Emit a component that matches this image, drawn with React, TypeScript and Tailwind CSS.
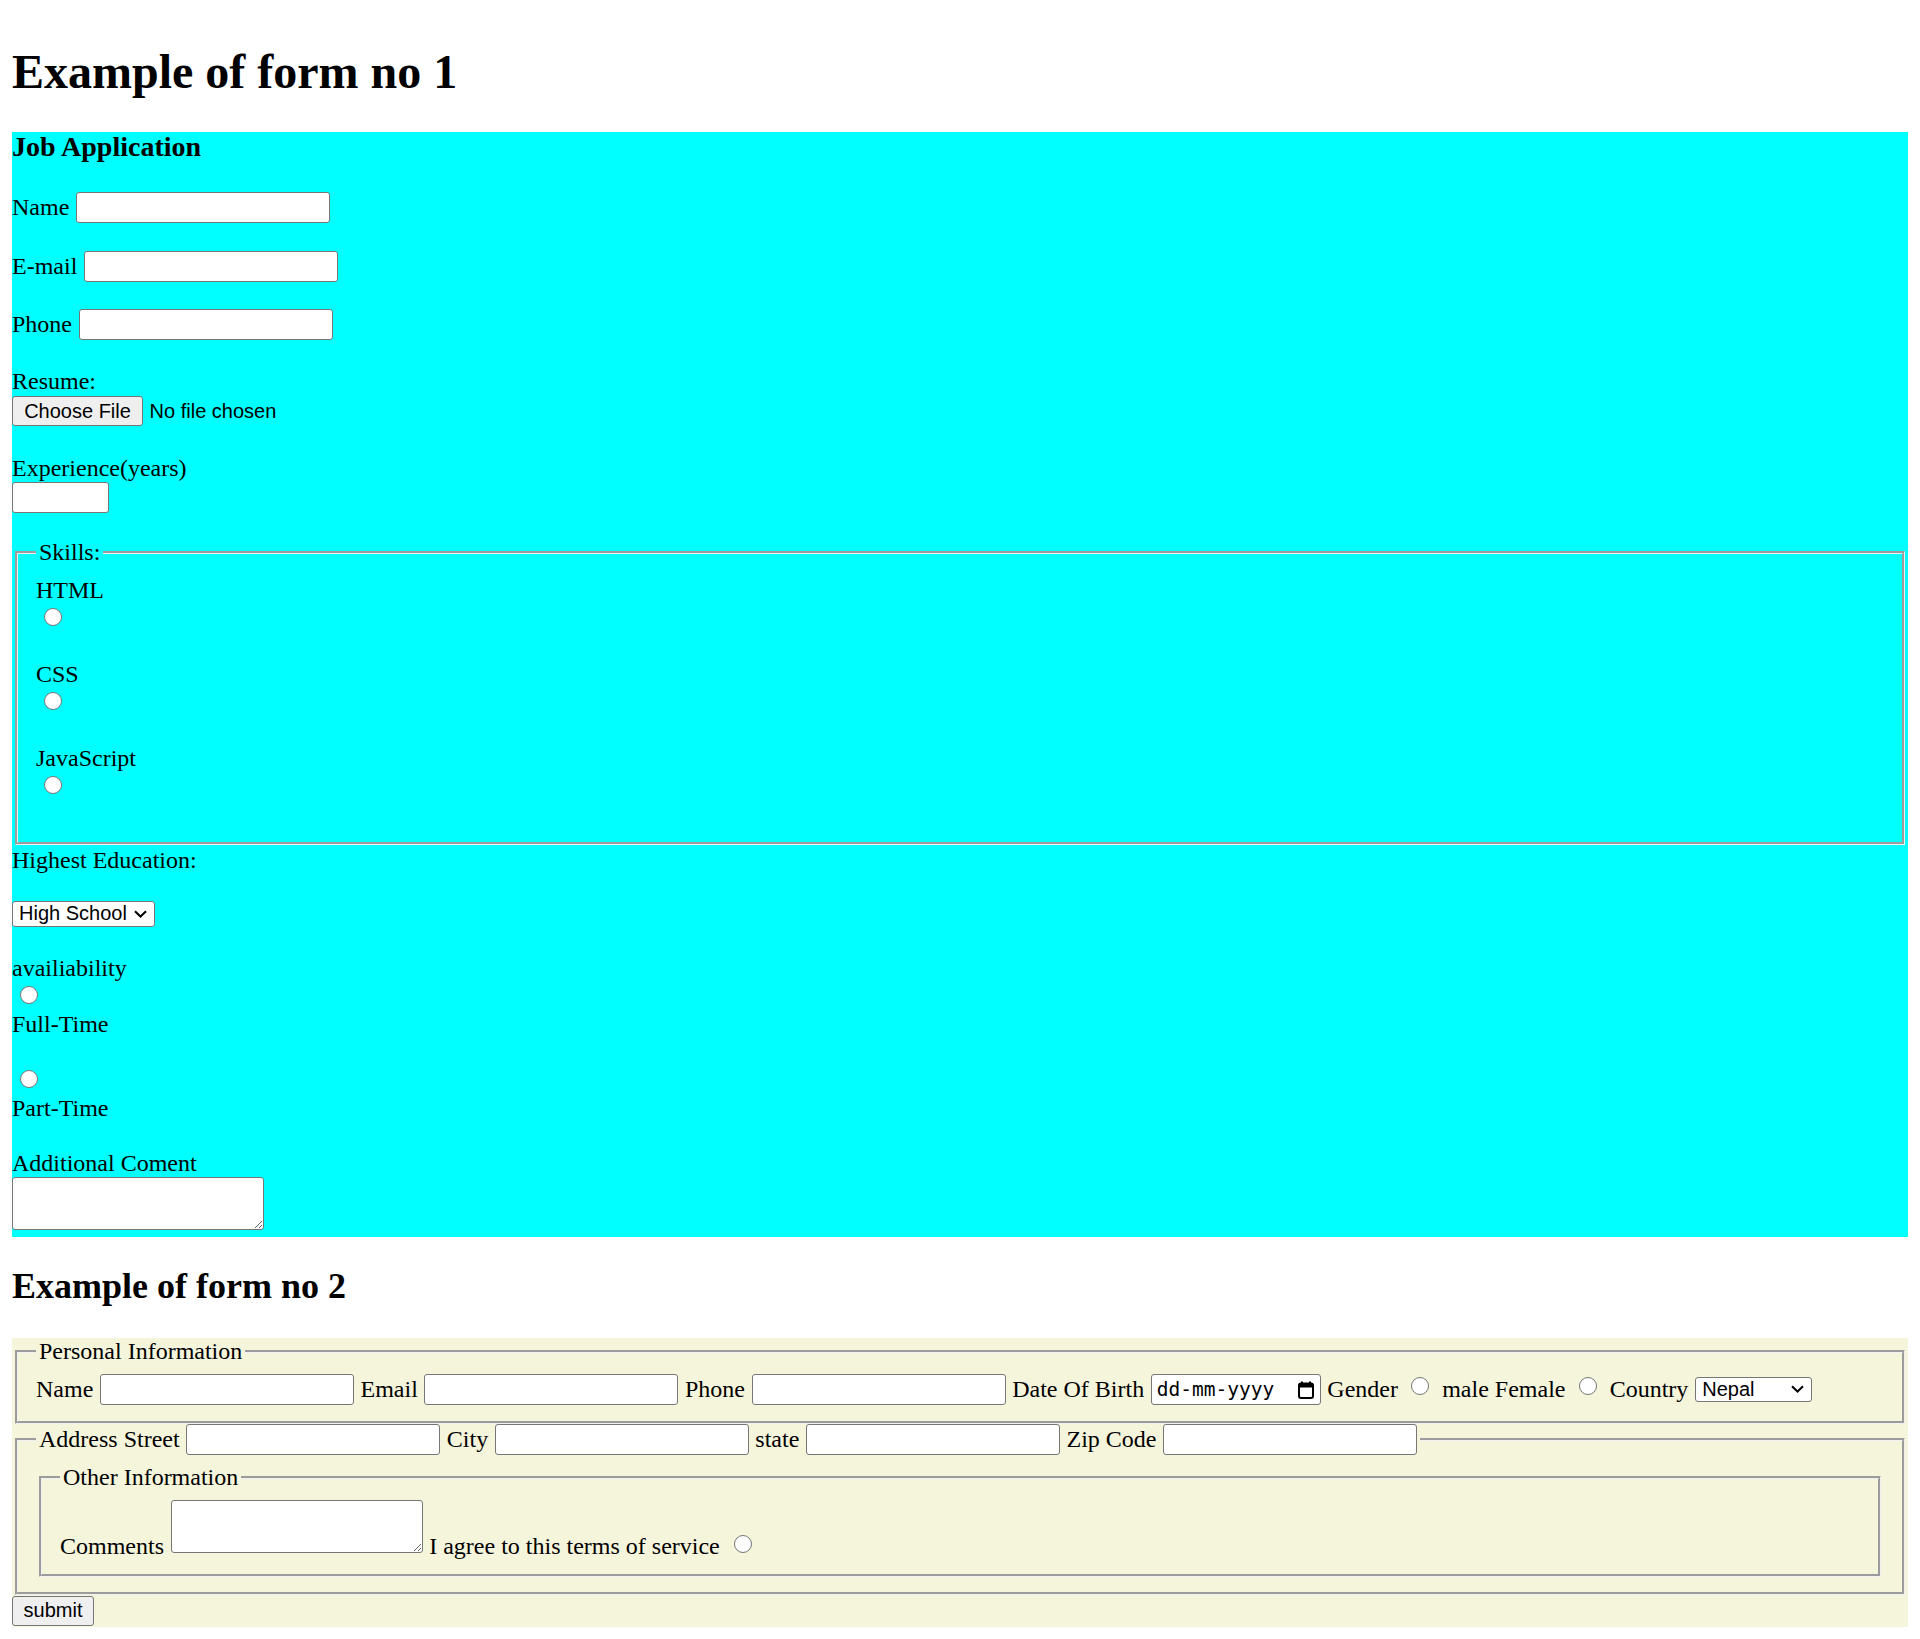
import React from "react";

const inputCls =
  "block h-[31px] w-[254px] shrink-0 rounded-[3px] border border-[#767676] bg-white outline-none";

function Radio({ className }: { className: string }) {
  return (
    <input
      type="radio"
      className={
        "block h-[18px] w-[18px] shrink-0 appearance-none rounded-full border border-[#767676] bg-white " +
        className
      }
    />
  );
}

function Chevron() {
  return (
    <svg width="13" height="8" viewBox="0 0 13 8" className="block shrink-0">
      <path d="M1 1.3L6.5 6.5L12 1.3" fill="none" stroke="#000" strokeWidth="2" />
    </svg>
  );
}

function Calendar() {
  return (
    <svg width="16" height="18" viewBox="0 0 16 18" className="block shrink-0">
      <rect x="3" y="0.5" width="2" height="3" fill="#000" />
      <rect x="11" y="0.5" width="2" height="3" fill="#000" />
      <rect x="1" y="2.5" width="14" height="14.5" rx="2" fill="none" stroke="#000" strokeWidth="2" />
      <rect x="1" y="2.5" width="14" height="4" fill="#000" />
    </svg>
  );
}

export default function App() {
  return (
    <div className="flex flex-col bg-white px-[12px] py-[12px] font-['Liberation_Serif',serif] text-[24px] leading-[30.4px] text-black">
      <h1 className="mt-[32.16px] mb-[32.16px] text-[48px] font-bold leading-[55.2px]">
        Example of form no 1
      </h1>

      <form className="flex flex-col bg-[#00ffff]">
        <h3 className="h-[32.3px] text-[28px] font-bold leading-[30.8px]">Job Application</h3>

        <div className="mt-[28px] flex h-[34.8px] items-start gap-[6.6px]">
          <label className="whitespace-nowrap">Name</label>
          <input type="text" className={inputCls} />
        </div>
        <div className="mt-[24px] flex h-[34.8px] items-start gap-[6.6px]">
          <label className="whitespace-nowrap">E-mail</label>
          <input type="email" className={inputCls} />
        </div>
        <div className="mt-[24px] flex h-[34.8px] items-start gap-[6.6px]">
          <label className="whitespace-nowrap">Phone</label>
          <input type="tel" className={inputCls} />
        </div>

        <div className="mt-[22.25px] flex flex-col">
          <label className="h-[27.6px]">Resume:</label>
          <div className="flex h-[35.4px] items-start gap-[6.6px] pt-[1.75px] font-['Liberation_Sans',sans-serif] text-[20px] leading-[23px]">
            <button
              type="button"
              className="flex h-[30.6px] w-[131px] items-center justify-center rounded-[3px] border border-[#767676] bg-[#efefef]"
            >
              Choose File
            </button>
            <span className="flex h-[30.6px] items-center">No file chosen</span>
          </div>
        </div>

        <div className="mt-[24px] flex flex-col">
          <label className="h-[27.6px]">Experience(years)</label>
          <div className="h-[34px] pt-[0.75px]">
            <input type="number" className="block h-[31px] w-[97px] rounded-[3px] border border-[#767676] bg-white outline-none" />
          </div>
        </div>

        <fieldset className="mx-[3px] mt-[24px] border-[3px] border-[#f0f0f0] px-[18px] pt-[8.4px] pb-[15px] [border-style:groove]">
          <legend className="px-[3px] leading-[27.6px]">Skills:</legend>
          <div className="flex flex-col">
            <label className="h-[27.6px]">HTML</label>
            <div className="h-[28.8px] pt-[5.7px] pl-[8px]">
              <Radio className="" />
            </div>
            <div className="h-[27.6px]" />
            <label className="h-[27.6px]">CSS</label>
            <div className="h-[28.8px] pt-[5.7px] pl-[8px]">
              <Radio className="" />
            </div>
            <div className="h-[27.6px]" />
            <label className="h-[27.6px]">JavaScript</label>
            <div className="h-[28.8px] pt-[5.7px] pl-[8px]">
              <Radio className="" />
            </div>
            <div className="h-[27.6px]" />
          </div>
        </fieldset>

        <label className="h-[27.6px]">Highest Education:</label>
        <div className="mt-[28.1px] flex">
          <div className="flex h-[26px] w-[143px] items-center justify-between rounded-[3px] border border-[#767676] bg-white pl-[6px] pr-[7.5px] font-['Liberation_Sans',sans-serif] text-[20px] leading-[23px]">
            <span>High School</span>
            <Chevron />
          </div>
        </div>

        <label className="mt-[26px] h-[27.6px]">availiability</label>
        <div className="h-[28.8px] pt-[5.7px] pl-[8px]">
          <Radio className="" />
        </div>
        <label className="h-[27.6px]">Full-Time</label>
        <div className="h-[27.6px]" />
        <div className="h-[28.8px] pt-[5.7px] pl-[8px]">
          <Radio className="" />
        </div>
        <label className="h-[27.6px]">Part-Time</label>

        <label className="mt-[27px] h-[27.6px]">Additional Coment</label>
        <div className="h-[61.35px] pt-[1.45px]">
          <textarea className="block h-[53px] w-[252px] resize rounded-[3px] border border-[#767676] bg-white outline-none" />
        </div>
      </form>

      <h2 className="mt-[29.9px] mb-[29.9px] text-[36px] font-bold leading-[41.4px]">
        Example of form no 2
      </h2>

      <form className="flex flex-col bg-[#f5f5dc]">
        <fieldset className="mx-[3px] border-[3px] border-[#f0f0f0] px-[18px] pt-[8.4px] pb-[15px] [border-style:groove]">
          <legend className="px-[3px] leading-[27.6px]">Personal Information</legend>
          <div className="flex h-[32px] items-start gap-[6.6px] whitespace-nowrap">
            <label>Name</label>
            <input type="text" className={inputCls + " mt-[0.5px]"} />
            <label>Email</label>
            <input type="email" className={inputCls + " mt-[0.5px]"} />
            <label>Phone</label>
            <input type="tel" className={inputCls + " mt-[0.5px]"} />
            <label>Date Of Birth</label>
            <div className="mt-[0.5px] flex h-[31px] w-[170px] shrink-0 items-center justify-between rounded-[3px] border border-[#767676] bg-white pl-[5px] pr-[6px]">
              <span className="font-['DejaVu_Sans_Mono',monospace] text-[19.5px] leading-[22px]">dd-mm-yyyy</span>
              <Calendar />
            </div>
            <label>Gender</label>
            <Radio className="mt-[3.4px] ml-[6.5px] mr-[6.5px]" />
            <label>male Female</label>
            <Radio className="mt-[3.4px] ml-[6.5px] mr-[6.5px]" />
            <label>Country</label>
            <div className="mt-[3px] flex h-[25px] w-[117px] shrink-0 items-center justify-between rounded-[3px] border border-[#767676] bg-white pl-[6.3px] pr-[7px] font-['Liberation_Sans',sans-serif] text-[20px] leading-[23px]">
              <span>Nepal</span>
              <Chevron />
            </div>
          </div>
        </fieldset>

        <fieldset className="mx-[3px] border-[3px] border-[#f0f0f0] px-[18px] pt-[8.4px] pb-[15px] [border-style:groove]">
          <legend className="px-[3px]">
            <div className="flex h-[31.5px] items-start gap-[6.6px] whitespace-nowrap pt-[0.5px]">
              <label className="h-[27.6px]">Address Street</label>
              <input type="text" className={inputCls} />
              <label className="h-[27.6px]">City</label>
              <input type="text" className={inputCls} />
              <label className="h-[27.6px]">state</label>
              <input type="text" className={inputCls} />
              <label className="h-[27.6px]">Zip Code</label>
              <input type="text" className={inputCls} />
            </div>
          </legend>

          <fieldset className="mx-[3px] border-[3px] border-[#f0f0f0] px-[18px] pt-[8.4px] pb-[15px] [border-style:groove]">
            <legend className="px-[3px] leading-[27.6px]">Other Information</legend>
            <div className="flex h-[59px] items-start gap-[6.6px] whitespace-nowrap">
              <label className="mt-[31.35px] h-[27.6px]">Comments</label>
              <textarea className="block h-[53.7px] w-[252px] shrink-0 resize rounded-[3px] border border-[#767676] bg-white outline-none" />
              <label className="mt-[31.35px] h-[27.6px]">I agree to this terms of service</label>
              <Radio className="mt-[35px] ml-[7.5px]" />
            </div>
          </fieldset>
        </fieldset>

        <div className="h-[32.3px] pt-[1px]">
          <button
            type="submit"
            className="flex h-[30.6px] w-[82px] items-center justify-center rounded-[3px] border border-[#767676] bg-[#efefef] font-['Liberation_Sans',sans-serif] text-[20px] leading-[23px]"
          >
            submit
          </button>
        </div>
      </form>
    </div>
  );
}
